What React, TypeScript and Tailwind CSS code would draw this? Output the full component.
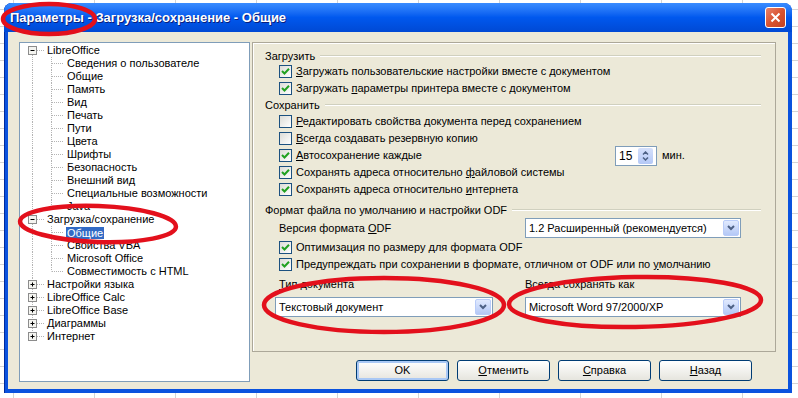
import React from 'react';

// tree rows: root items and their children
type Row = { text: string; level: 0 | 1; open?: boolean; last?: boolean; selected?: boolean; rootLine?: boolean };

const rows: Row[] = [
  { text: 'LibreOffice', level: 0, open: true },
  { text: 'Сведения о пользователе', level: 1, rootLine: true },
  { text: 'Общие', level: 1, rootLine: true },
  { text: 'Память', level: 1, rootLine: true },
  { text: 'Вид', level: 1, rootLine: true },
  { text: 'Печать', level: 1, rootLine: true },
  { text: 'Пути', level: 1, rootLine: true },
  { text: 'Цвета', level: 1, rootLine: true },
  { text: 'Шрифты', level: 1, rootLine: true },
  { text: 'Безопасность', level: 1, rootLine: true },
  { text: 'Внешний вид', level: 1, rootLine: true },
  { text: 'Специальные возможности', level: 1, rootLine: true },
  { text: 'Java', level: 1, rootLine: true, last: true },
  { text: 'Загрузка/сохранение', level: 0, open: true },
  { text: 'Общие', level: 1, rootLine: true, selected: true },
  { text: 'Свойства VBA', level: 1, rootLine: true },
  { text: 'Microsoft Office', level: 1, rootLine: true },
  { text: 'Совместимость с HTML', level: 1, rootLine: true, last: true },
  { text: 'Настройки языка', level: 0 },
  { text: 'LibreOffice Calc', level: 0 },
  { text: 'LibreOffice Base', level: 0 },
  { text: 'Диаграммы', level: 0 },
  { text: 'Интернет', level: 0, last: true },
];

function TreeRow({ row, first }: { row: Row; first: boolean }) {
  const dash = '1 1';
  if (row.level === 0) {
    return (
      <div className="flex h-[13px] items-center">
        <svg width="26" height="13" className="shrink-0">
          {!first && <line x1="12.5" y1="0" x2="12.5" y2="4" stroke="#b4b4b4" strokeDasharray={dash} />}
          {!row.last && <line x1="12.5" y1="11" x2="12.5" y2="13" stroke="#b4b4b4" strokeDasharray={dash} />}
          <line x1="17" y1="6.5" x2="25" y2="6.5" stroke="#b4b4b4" strokeDasharray={dash} />
          <rect x="8.5" y="2.5" width="8" height="8" fill="#f4f4f0" stroke="#8c8c8c" />
          <line x1="10.5" y1="6.5" x2="14.5" y2="6.5" stroke="#000" />
          {!row.open && <line x1="12.5" y1="4.5" x2="12.5" y2="8.5" stroke="#000" />}
        </svg>
        <span className="ml-[1px] whitespace-nowrap">{row.text}</span>
      </div>
    );
  }
  return (
    <div className="flex h-[13px] items-center">
      <svg width="46" height="13" className="shrink-0">
        {row.rootLine && <line x1="12.5" y1="0" x2="12.5" y2="13" stroke="#b4b4b4" strokeDasharray={dash} />}
        <line x1="31.5" y1="0" x2="31.5" y2={row.last ? 6.5 : 13} stroke="#b4b4b4" strokeDasharray={dash} />
        <line x1="32" y1="6.5" x2="44" y2="6.5" stroke="#b4b4b4" strokeDasharray={dash} />
      </svg>
      <span
        className={
          row.selected
            ? 'whitespace-nowrap bg-[#316ac5] px-[1px] leading-[12px] text-white'
            : 'whitespace-nowrap px-[1px]'
        }
      >
        {row.text}
      </span>
    </div>
  );
}

function Box({ checked }: { checked?: boolean }) {
  return (
    <div className="flex h-[13px] w-[13px] shrink-0 items-center justify-center border border-[#1c5180] bg-gradient-to-br from-[#dcdcd7] to-white">
      {checked && (
        <svg width="9" height="9" viewBox="0 0 9 9">
          <path d="M1 4 L3.5 6.5 L8 1.8" fill="none" stroke="#21a121" strokeWidth="2" />
        </svg>
      )}
    </div>
  );
}

function Check({ checked, children }: { checked?: boolean; children: React.ReactNode }) {
  return (
    <div className="flex h-[17px] items-center pl-[26px]">
      <Box checked={checked} />
      <span className="ml-[4px] whitespace-nowrap">{children}</span>
    </div>
  );
}

function Header({ children, h }: { children: React.ReactNode; h: string }) {
  return (
    <div className={`flex items-center pl-[12px] pr-[14px] ${h}`}>
      <span className="whitespace-nowrap">{children}</span>
      <div className="ml-[5px] h-[2px] flex-1 border-t border-b border-t-[#d0d0bf] border-b-white" />
    </div>
  );
}

function Select({ value, w }: { value: string; w: string }) {
  return (
    <div className={`flex h-[20px] items-center border border-[#7f9db9] bg-white pl-[3px] pr-[1px] ${w}`}>
      <span className="flex-1 whitespace-nowrap">{value}</span>
      <div className="flex h-[16px] w-[16px] items-center justify-center rounded-[2px] border border-[#b9ccf9] bg-gradient-to-b from-[#e1eafe] to-[#b4c8f6]">
        <svg width="8" height="6" viewBox="0 0 8 6">
          <path d="M1 1 L4 4 L7 1" fill="none" stroke="#4d6185" strokeWidth="2" />
        </svg>
      </div>
    </div>
  );
}

function Btn({ children, def }: { children: React.ReactNode; def?: boolean }) {
  return (
    <div
      className={
        def
          ? 'flex h-[21px] w-[93px] items-center justify-center rounded-[3px] border border-[#003c74] bg-gradient-to-b from-white to-[#e6e5de] shadow-[inset_0_0_0_2px_#a9c8f5]'
          : 'flex h-[21px] w-[93px] items-center justify-center rounded-[3px] border border-[#003c74] bg-gradient-to-b from-white to-[#e6e5de]'
      }
    >
      {children}
    </div>
  );
}

export default function App() {
  return (
    <div className="relative h-[398px] w-[798px] overflow-hidden bg-white bg-[linear-gradient(to_right,#d4d4d4_1px,transparent_1px),linear-gradient(to_bottom,#d4d4d4_1px,transparent_1px)] bg-[size:81px_17px] bg-[position:-68px_-8px] font-['Liberation_Sans',Arial,sans-serif] text-[11px] text-black">
      {/* window */}
      <div className="ml-[4px] mt-[3px] flex h-[390px] w-[788px] flex-col rounded-t-[8px] bg-[#0a52de] shadow-[inset_1px_0_0_#002a9c]">
        {/* title bar */}
        <div className="flex h-[29px] items-center rounded-t-[8px] bg-gradient-to-b from-[#3a8cff] via-[#0058ee] to-[#0049d4] pl-[6px] pr-[6px]">
          <span className="flex-1 text-[13px] font-bold text-white [text-shadow:1px_1px_0_#0a1e7a]">
            Параметры - Загрузка/сохранение - Общие
          </span>
          <div className="flex h-[21px] w-[21px] items-center justify-center rounded-[3px] border border-white bg-gradient-to-br from-[#e8826b] via-[#d9532f] to-[#c44122]">
            <svg width="11" height="11" viewBox="0 0 11 11">
              <path d="M1.5 1.5 L9.5 9.5 M9.5 1.5 L1.5 9.5" stroke="#fff" strokeWidth="2" />
            </svg>
          </div>
        </div>

        {/* body */}
        <div className="mx-[4px] mb-[4px] flex flex-1 bg-[#ece9d8] pl-[11px] pr-[12px] pt-[10px]">
          {/* tree */}
          <div className="h-[340px] w-[231px] shrink-0 border border-[#7f9db9] bg-white pt-[1px]">
            {rows.map((r, i) => (
              <TreeRow key={i} row={r} first={i === 0} />
            ))}
          </div>

          {/* right side */}
          <div className="ml-[2px] flex flex-1 flex-col">
            <div className="h-[310px] border border-[#aca899] shadow-[inset_1px_1px_0_white] pt-[6px]">
              <Header h="h-[14px]">Загрузить</Header>
              <Check checked>
                <u>З</u>агружать пользовательские настройки вместе с документом
              </Check>
              <Check checked>
                Загружать <u>п</u>араметры принтера вместе с документом
              </Check>
              <Header h="h-[16px]">Сохранить</Header>
              <Check>
                <u>Р</u>едактировать свойства документа перед сохранением
              </Check>
              <Check>
                <u>В</u>сегда создавать резервную копию
              </Check>
              <div className="flex h-[17px] items-center pl-[26px]">
                <Box checked />
                <span className="ml-[4px] w-[319px] whitespace-nowrap">
                  <u>А</u>втосохранение каждые
                </span>
                <div className="flex h-[20px] w-[42px] items-center border border-[#7f9db9] bg-white pl-[3px] pr-[3px]">
                  <span className="flex-1 text-[12px]">15</span>
                  <div className="flex h-[16px] w-[15px] flex-col items-center justify-center gap-[2px] rounded-[2px] bg-gradient-to-b from-[#d5e0fb] to-[#b4c8f6]">
                    <svg width="7" height="4" viewBox="0 0 7 4">
                      <path d="M1 3.5 L3.5 1 L6 3.5" fill="none" stroke="#4d6185" strokeWidth="1.5" />
                    </svg>
                    <svg width="7" height="4" viewBox="0 0 7 4">
                      <path d="M1 0.5 L3.5 3 L6 0.5" fill="none" stroke="#4d6185" strokeWidth="1.5" />
                    </svg>
                  </div>
                </div>
                <span className="ml-[5px]">мин.</span>
              </div>
              <Check checked>
                Сохранять адреса относительно <u>ф</u>айловой системы
              </Check>
              <Check checked>
                Сохранять адреса относительно <u>и</u>нтернета
              </Check>
              <div className="mt-[4px]">
                <Header h="h-[16px]">Формат файла по умолчанию и настройки ODF</Header>
              </div>
              <div className="flex h-[20px] items-center pl-[26px]">
                <span className="w-[246px] whitespace-nowrap">
                  Версия формата <u>O</u>DF
                </span>
                <Select value="1.2 Расширенный (рекомендуется)" w="w-[216px]" />
              </div>
              <div className="flex h-[18px] items-end">
                <div className="flex-1">
                  <Check checked>Оптимизация по размеру для формата ODF</Check>
                </div>
              </div>
              <Check checked>
                Предупреждать при сохранении в формате, отличном от ODF или по <u>у</u>молчанию
              </Check>
              <div className="mt-[3px] flex pl-[22px]">
                <div className="flex w-[218px] flex-col">
                  <span className="h-[16px] pl-[4px] leading-[16px]">
                    <u>Т</u>ип документа
                  </span>
                  <div className="mt-[5px]">
                    <Select value="Текстовый документ" w="w-[218px]" />
                  </div>
                </div>
                <div className="ml-[32px] flex w-[216px] flex-col">
                  <span className="h-[16px] leading-[16px]">
                    Всег<u>д</u>а сохранять как
                  </span>
                  <div className="mt-[5px]">
                    <Select value="Microsoft Word 97/2000/XP" w="w-[216px]" />
                  </div>
                </div>
              </div>
            </div>

            {/* buttons */}
            <div className="mt-[8px] flex justify-end gap-[8px] pr-[24px]">
              <Btn def>OK</Btn>
              <Btn>
                <u>О</u>тменить
              </Btn>
              <Btn>
                <u>С</u>правка
              </Btn>
              <Btn>
                <u>Н</u>азад
              </Btn>
            </div>
          </div>
        </div>
      </div>

      {/* red hand-drawn marks over the screenshot */}
      <svg className="pointer-events-none absolute left-0 top-0" width="798" height="398">
        <g fill="none" stroke="#e3101c" strokeWidth="4.5">
          <ellipse cx="49" cy="19" rx="46" ry="15" />
          <ellipse cx="98" cy="224" rx="78" ry="18" transform="rotate(2 98 224)" />
          <ellipse cx="384" cy="305" rx="120" ry="27" />
          <ellipse cx="635" cy="302" rx="126" ry="25" transform="rotate(-1 635 302)" />
        </g>
      </svg>
    </div>
  );
}
